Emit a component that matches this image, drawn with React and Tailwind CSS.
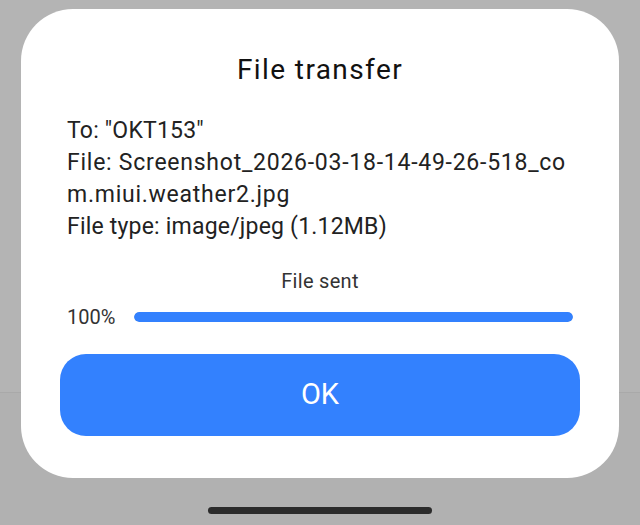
import React from 'react';

function ProgressRow({ percent }) {
    return (
        <div className="flex items-center h-6 gap-[18px]">
            <span className="text-[20px] leading-6 text-[#333] w-[49px] shrink-0">{percent}%</span>
            <div className="flex-1 h-[10px] rounded-full bg-[#e6e6e6] overflow-hidden">
                <div className="h-full rounded-full bg-[#3381fe]" style={{ width: `${percent}%` }} />
            </div>
        </div>
    );
}

export default function App() {
    return (
        <div className="relative w-[640px] h-[525px] overflow-hidden bg-[#b1b1b1] font-['Roboto',sans-serif]">
            {/* dimmed page behind the dialog */}
            <div className="h-[393px] bg-[#b4b4b4] border-b border-[#a9a9a9]" />

            {/* dialog */}
            <div className="absolute left-[21px] top-[9px] w-[598px] h-[469px] bg-white rounded-[52px] pt-[43px] px-[46px]">
                <h2 className="text-center text-[28px] leading-9 tracking-[1.4px] text-[#111]">File transfer</h2>

                <div className="mt-[27px] text-[23px] leading-8 tracking-[0.2px] text-[#222] whitespace-nowrap">
                    <p>To: "OKT153"</p>
                    <p className="tracking-[0.75px]">
                        File: Screenshot_2026-03-18-14-49-26-518_co<br />m.miui.weather2.jpg
                    </p>
                    <p>File type: image/jpeg (1.12MB)</p>
                </div>

                <p className="mt-[26px] text-center text-[20px] leading-6 tracking-[0.3px] text-[#333]">File sent</p>

                <div className="mt-3">
                    <ProgressRow percent={100} />
                </div>

                <button className="mt-[25px] -mx-[7px] w-[520px] h-[82px] rounded-[26px] bg-[#3381fe] text-white text-[29px]">
                    OK
                </button>
            </div>

            {/* home indicator */}
            <div className="absolute left-[208px] top-[507px] w-[224px] h-[7px] rounded-full bg-[#2b2b2b]" />
        </div>
    );
}
